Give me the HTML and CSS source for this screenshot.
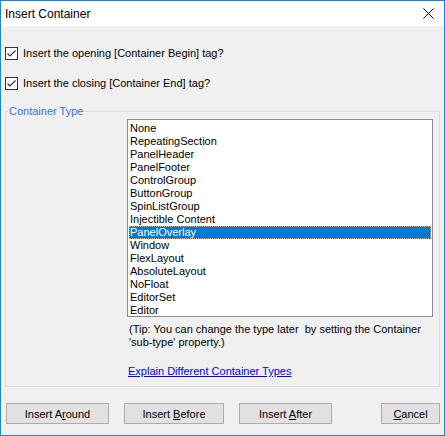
FILE: index.html
```html
<!DOCTYPE html>
<html lang="en">
<head>
<meta charset="UTF-8" />
<title>Insert Container</title>
<link rel="stylesheet" href="styles.css">
</head>
<body>
    <div class="window">
        <div class="titlebar">
            <span class="title">Insert Container</span>
            <svg class="close" width="11" height="11" viewBox="0 0 11 11">
                <path d="M0.5 0.5 L10.5 10.5 M10.5 0.5 L0.5 10.5" stroke="#000" stroke-width="1" fill="none" />
            </svg>
        </div>

        <div class="content">
            <label class="check">
                <svg width="13" height="13" viewBox="0 0 13 13">
                    <rect x="0.5" y="0.5" width="12" height="12" fill="#fff" stroke="#333" />
                    <polyline points="2.5,6.5 5,9 10.5,3.5" fill="none" stroke="#333" stroke-width="1.2" />
                </svg>
                <span>Insert the opening [Container Begin] tag?</span>
            </label>
            <label class="check second">
                <svg width="13" height="13" viewBox="0 0 13 13">
                    <rect x="0.5" y="0.5" width="12" height="12" fill="#fff" stroke="#333" />
                    <polyline points="2.5,6.5 5,9 10.5,3.5" fill="none" stroke="#333" stroke-width="1.2" />
                </svg>
                <span>Insert the closing [Container End] tag?</span>
            </label>

            <fieldset class="group">
                <legend>Container Type</legend>
                <div class="listbox">
                    <div class="item">None</div>
                    <div class="item">RepeatingSection</div>
                    <div class="item">PanelHeader</div>
                    <div class="item">PanelFooter</div>
                    <div class="item">ControlGroup</div>
                    <div class="item">ButtonGroup</div>
                    <div class="item">SpinListGroup</div>
                    <div class="item">Injectible Content</div>
                    <div class="item selected">PanelOverlay</div>
                    <div class="item">Window</div>
                    <div class="item">FlexLayout</div>
                    <div class="item">AbsoluteLayout</div>
                    <div class="item">NoFloat</div>
                    <div class="item">EditorSet</div>
                    <div class="item">Editor</div>
                </div>
                <p class="tip">(Tip: You can change the type later&nbsp; by setting the Container<br>'sub-type' property.)</p>
                <a class="explain" href="#">Explain Different Container Types</a>
            </fieldset>

            <div class="buttons">
                <button class="btn around">Insert A<u>r</u>ound</button>
                <button class="btn before">Insert <u>B</u>efore</button>
                <button class="btn after">Insert <u>A</u>fter</button>
                <button class="btn cancel"><u>C</u>ancel</button>
            </div>
        </div>
    </div>
</body>
</html>
```

FILE: styles.css
```css
body {
    margin: 0;
    font-family: "Liberation Sans", Arial, sans-serif;
    font-size: 11px;
    color: #000;
}
.window {
    width: 445px;
    height: 436px;
    box-sizing: border-box;
    border: 1px solid #1b84d8;
    display: flex;
    flex-direction: column;
    background: #f0f0f0;
}
.titlebar {
    height: 25px;
    background: #fff;
    display: flex;
    align-items: center;
    justify-content: space-between;
    padding-left: 4px;
}
.title {
    font-size: 12px;
    line-height: 14px;
}
.close {
    margin-right: 10px;
}
.content {
    flex: 1;
    padding: 21px 4px 0 4px;
}
.check {
    display: flex;
    align-items: center;
    height: 13px;
    line-height: 13px;
}
.check svg {
    flex: none;
    margin-left: 0;
}
.check span {
    margin-left: 5px;
}
.check.second {
    margin-top: 17px;
}
.group {
    margin: 15px 0 0 0;
    padding: 1px 0 8px 0;
    border: 1px solid #dcdcdc;
    min-width: 0;
}
.group legend {
    padding: 0 1px;
    margin-left: 2px;
    line-height: 13px;
    color: #3c6ef5;
}
.listbox {
    margin: 0 6px 0 121px;
    height: 198px;
    box-sizing: border-box;
    border: 1px solid #8c8c8c;
    background: #fff;
    padding: 2px 1px 0 1px;
    overflow: hidden;
}
.item {
    line-height: 13px;
    height: 13px;
    padding-left: 1px;
    white-space: nowrap;
}
.item.selected {
    background: #0078d7;
    color: #fff;
    outline: 1px dotted #f2a33a;
    outline-offset: -1px;
}
.tip {
    margin: 6px 0 0 123px;
    line-height: 13px;
}
.explain {
    display: block;
    width: fit-content;
    margin: 16px 0 0 122px;
    line-height: 13px;
    color: #0000ff;
}
.buttons {
    display: flex;
    gap: 15px;
    margin-top: 16px;
    padding-left: 1px;
}
.btn {
    height: 21px;
    padding: 0;
    border: 1px solid #adadad;
    background: #e1e1e1;
    font-family: inherit;
    font-size: 11px;
    color: #000;
}
.around { width: 103px; }
.before { width: 100px; }
.after { width: 93px; }
.cancel {
    width: 59px;
    margin-left: auto;
}
```
